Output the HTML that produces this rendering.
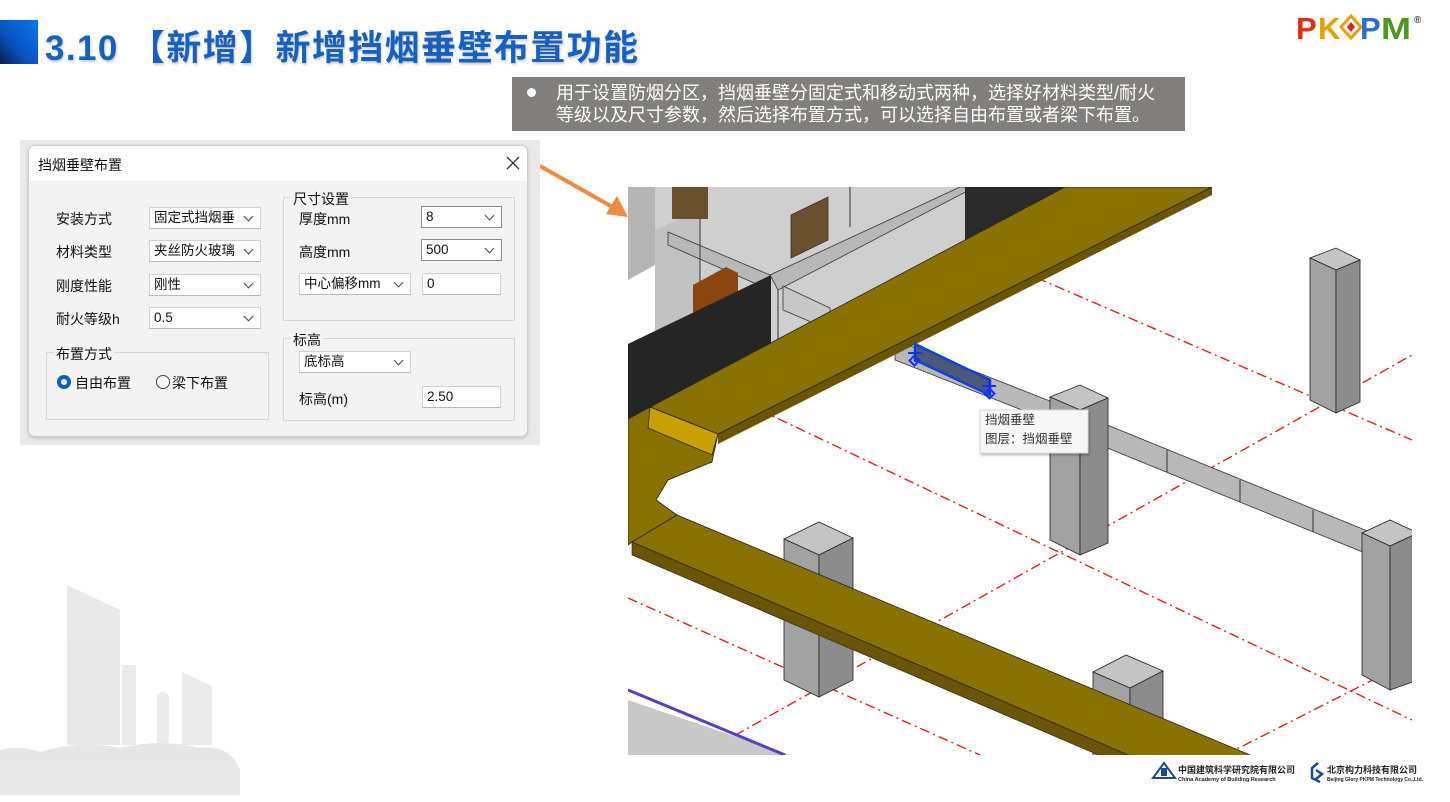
<!DOCTYPE html>
<html><head><meta charset="utf-8"><style>
*{margin:0;padding:0;box-sizing:border-box}
body{width:1450px;height:802px;background:#fff;position:relative;overflow:hidden;font-family:"Liberation Sans","Noto Sans CJK SC",sans-serif}
.abs{position:absolute}
.title{left:45px;top:20px;font-size:35px;font-weight:bold;color:#1560c0;white-space:nowrap;letter-spacing:1.4px;text-shadow:1px 2px 2px rgba(0,0,0,.2)}
.callout{left:512px;top:77px;width:673px;height:54px;background:#807f7e;color:#fff;font-size:18px;line-height:22px;padding:5px 0 0 44px;white-space:nowrap}
.callout:before{content:"";position:absolute;left:15px;top:11px;width:9px;height:9px;border-radius:50%;background:#fff}
.dlgwrap{left:20px;top:140px;width:520px;height:305px;background:#e9e9e9}
.dlg{left:28px;top:145px;width:500px;height:292px;background:#f3f3f3;border:1px solid #cfcfcf;border-radius:7px;overflow:hidden;box-shadow:0 1px 3px rgba(0,0,0,.2)}
.dlg .tb{height:35px;background:#fff;font-size:14px;padding:9px 0 0 9px;color:#111}
.t{position:absolute;font-size:14px;color:#111;white-space:nowrap}
.cb{position:absolute;height:22px;background:#fff;border:1px solid #d0d0d0;border-bottom-color:#b8b8b8;font-size:13.5px;padding:0 0 0 4px;line-height:20px;white-space:nowrap;overflow:hidden;color:#111}
.cb.a:after{content:"";position:absolute;right:8px;top:5px;width:6px;height:6px;border-right:1px solid #444;border-bottom:1px solid #444;transform:rotate(45deg)}
.cb.dk{border-color:#8a8a8a}
.grp{position:absolute;border:1px solid #d6d6d6}
.gl{position:absolute;background:#f3f3f3;font-size:14px;padding:0 2px;color:#111}
</style></head><body>

<svg class="abs" style="left:0;top:0" width="1450" height="802">
<defs>
<linearGradient id="bq" x1="1" y1="0" x2="0" y2="1"><stop offset="0" stop-color="#0a78f0"/><stop offset="0.6" stop-color="#0a52c0"/><stop offset="1" stop-color="#06204a"/></linearGradient>
<clipPath id="ic"><rect x="628" y="187" width="784" height="568"/></clipPath>
</defs>
<rect x="0" y="20" width="38" height="44" fill="url(#bq)"/>
<!-- city bg -->
<g opacity="0.22">
<polygon points="67,585 120,610 120,745 67,745" fill="#9a9a9a"/>
<rect x="122" y="665" width="14" height="80" fill="#a4a4a4"/>
<rect x="157" y="692" width="12" height="55" rx="6" fill="#a8a8a8"/>
<polygon points="182,672 212,686 212,745 182,745" fill="#a6a6a6"/>
<path d="M0,750 Q20,745 40,752 Q80,740 120,748 Q160,738 200,748 Q230,744 240,770 L240,795 L0,795Z" fill="#909090"/>
</g>
<!-- arrow -->
<line x1="540" y1="166" x2="616" y2="209" stroke="#f08a3c" stroke-width="4"/>
<polygon points="628,217 606,214 617,196" fill="#f08a3c"/>

<g clip-path="url(#ic)">
<!-- building -->
<polygon points="628,187 1065,187 650,407 628,419" fill="#cfcfcf"/>
<polygon points="628,187 655,187 655,265 628,280" fill="#b4b4b4"/>
<polygon points="628,280 655,265 655,419 628,419" fill="#fff"/>
<polygon points="655,230 700,210 700,395 655,410" fill="#c2c2c2"/>
<polygon points="668,232 770,275 770,290 668,245" fill="#b8b8b8" stroke="#333" stroke-width=".8"/>
<polygon points="770,275 960,187 975,187 778,290" fill="#b8b8b8" stroke="#333" stroke-width=".8"/>
<line x1="700" y1="215" x2="700" y2="380" stroke="#333"/>
<line x1="778" y1="290" x2="778" y2="340" stroke="#333"/>
<line x1="850" y1="187" x2="850" y2="227" stroke="#333"/>
<polygon points="783,286 830,308 830,330 783,310" fill="#c8c8c8" stroke="#333" stroke-width=".8"/>
<polygon points="965,187 1065,187 1028,207 965,240" fill="#2a2a2a"/>
<rect x="672" y="187" width="36" height="32" fill="#6b5030"/>
<polygon points="791,215 828,197 828,240 791,258" fill="#6b5030" stroke="#333" stroke-width=".8"/>
<polygon points="693,285 726,267 738,273 738,300 705,318 693,312" fill="#8a4510"/>
<polygon points="628,344 771,275 771,343 628,419" fill="#252525"/>
<!-- dashed red grid -->
<g stroke="#e02020" stroke-width="1.4" stroke-dasharray="10,4,2,4" fill="none">
<line x1="1000" y1="262" x2="1412" y2="440"/>
<line x1="760" y1="410" x2="1412" y2="720"/>
<line x1="628" y1="598" x2="980" y2="755"/>
<line x1="700" y1="755" x2="1412" y2="355"/>
<line x1="1225" y1="755" x2="1412" y2="660"/>
</g>
<!-- smoke wall strips -->
<polygon points="895,340 1060,405 1060,425 895,360" fill="#b8b8b8" stroke="#333" stroke-width=".8"/>
<polygon points="1095,420 1370,532 1370,555 1095,443" fill="#b8b8b8" stroke="#333" stroke-width=".8"/>
<line x1="1167" y1="450" x2="1167" y2="472" stroke="#333"/>
<line x1="1240" y1="480" x2="1240" y2="502" stroke="#333"/>
<line x1="1313" y1="510" x2="1313" y2="532" stroke="#333"/>
<!-- upper beam -->
<polygon points="718,434 1212,187 1212,195 718,444" fill="#6a5600"/>
<polygon points="1065,187 1212,187 718,434 650,407" fill="#8a7200" stroke="#222" stroke-width=".8"/>
<!-- corner -->
<polygon points="628,419 650,407 718,434 712,462 668,480 656,500 677,515 632,542 628,545" fill="#8a7200" stroke="#222" stroke-width=".8"/>
<polygon points="650,407 718,434 712,455 648,428" fill="#c8a000" stroke="#222" stroke-width=".8"/>
<!-- columns -->
<g stroke="#222" stroke-width=".8">
<polygon points="1310,258 1336,248 1360,260 1336,270" fill="#c4c4c4"/>
<polygon points="1310,258 1336,270 1336,413 1310,400" fill="#a2a2a2"/>
<polygon points="1336,270 1360,260 1360,402 1336,413" fill="#8c8c8c"/>

<polygon points="1050,397 1080,385 1108,398 1080,410" fill="#c4c4c4"/>
<polygon points="1050,397 1080,410 1080,555 1050,540" fill="#a2a2a2"/>
<polygon points="1080,410 1108,398 1108,543 1080,555" fill="#8c8c8c"/>

<polygon points="784,539 819,522 853,538 819,555" fill="#c4c4c4"/>
<polygon points="784,539 819,555 819,697 784,680" fill="#a2a2a2"/>
<polygon points="819,555 853,538 853,680 819,697" fill="#8c8c8c"/>

<polygon points="1093,672 1126,655 1163,671 1130,688" fill="#c4c4c4"/>
<polygon points="1093,672 1130,688 1130,760 1093,760" fill="#a2a2a2"/>
<polygon points="1130,688 1163,671 1163,760 1130,760" fill="#8c8c8c"/>

<polygon points="1362,533 1390,520 1418,533 1390,546" fill="#c4c4c4"/>
<polygon points="1362,533 1390,546 1390,690 1362,675" fill="#a2a2a2"/>
<polygon points="1390,546 1418,533 1418,680 1390,690" fill="#8c8c8c"/>
</g>
<!-- lower beam (in front of columns) -->
<polygon points="632,542 1140,760 1110,760 632,555" fill="#6a5600" stroke="#222" stroke-width=".6"/>
<polygon points="677,515 1262,760 1140,760 632,542" fill="#8a7200" stroke="#222" stroke-width=".8"/>
<!-- purple + bottom gray -->
<polygon points="628,700 790,755 628,755" fill="#c8c8c8"/>
<line x1="628" y1="690" x2="785" y2="755" stroke="#5a3ec8" stroke-width="3"/>
<!-- selected smoke wall -->
<polygon points="915,344 990,380 990,395 915,360" fill="#4b5878" stroke="#1040e0" stroke-width="2.5"/>
<g stroke="#1030ff" stroke-width="2" fill="none">
<line x1="915" y1="345" x2="915" y2="362"/><line x1="908" y1="353" x2="922" y2="353"/>
<rect x="911" y="357" width="7" height="7" transform="rotate(45 914.5 360.5)"/>
<line x1="989" y1="378" x2="989" y2="393"/><line x1="982" y1="386" x2="996" y2="386"/>
<rect x="986" y="390" width="7" height="7" transform="rotate(45 989.5 393.5)"/>
</g>
</g>
<!-- tooltip -->
<rect x="980" y="410" width="108" height="43" fill="#f7f7f7" stroke="#d8d8d8" filter="drop-shadow(1px 2px 1px rgba(0,0,0,.25))"/>
<text x="985" y="424" font-size="12.5" fill="#333" font-family="Liberation Sans,Noto Sans CJK SC,sans-serif">挡烟垂壁</text>
<text x="985" y="443" font-size="12.5" fill="#333" font-family="Liberation Sans,Noto Sans CJK SC,sans-serif">图层：挡烟垂壁</text>
<!-- PKPM logo -->
<g font-family="Liberation Sans,sans-serif" font-weight="bold" font-size="31">
<text x="1296" y="39" fill="#e03010">P</text>
<text x="1318" y="39" fill="#e8a000">K</text>
<polygon points="1351,16 1361,27 1351,38 1341,27" fill="#fff" stroke="#e8a000" stroke-width="3"/>
<polygon points="1351,22 1355,27 1351,32 1347,27" fill="#e02020"/>
<text x="1360" y="39" fill="#2a70c8">P</text>
<text x="1381" y="39" fill="#4a9a20" textLength="30" lengthAdjust="spacingAndGlyphs">M</text>
<text x="1414" y="23" font-size="10" fill="#444">®</text>
</g>
<!-- footer logos -->
<g font-family="Liberation Sans,Noto Sans CJK SC,sans-serif">
<path d="M1153,778 L1164,763 L1175,778Z" fill="none" stroke="#1a4a9a" stroke-width="2"/>
<rect x="1161" y="768" width="6" height="8" fill="#1a4a9a"/>
<text x="1178" y="773" font-size="9" font-weight="bold" fill="#222">中国建筑科学研究院有限公司</text>
<text x="1178" y="781" font-size="5.5" font-weight="bold" fill="#222">China Academy of Building Research</text>
<path d="M1318,763 L1312,768 L1312,778 L1320,782 M1316,770 L1322,774 L1316,779" fill="none" stroke="#1a4a9a" stroke-width="2.5"/>
<text x="1327" y="773" font-size="9" font-weight="bold" fill="#222">北京构力科技有限公司</text>
<text x="1327" y="781" font-size="5" font-weight="bold" fill="#222">Beijing Glory PKPM Technology Co.,Ltd.</text>
</g>
</svg>

<div class="abs title">3.10 【新增】新增挡烟垂壁布置功能</div>
<div class="abs callout">用于设置防烟分区，挡烟垂壁分固定式和移动式两种，选择好材料类型/耐火<br>等级以及尺寸参数，然后选择布置方式，可以选择自由布置或者梁下布置。</div>

<div class="abs dlgwrap"></div>
<div class="abs dlg">
 <div class="tb">挡烟垂壁布置</div>
 <svg class="abs" style="left:477px;top:10px" width="14" height="14"><path d="M1,1 L13,13 M13,1 L1,13" stroke="#333" stroke-width="1.3"/></svg>
 <div class="t" style="left:27px;top:63px">安装方式</div>
 <div class="t" style="left:27px;top:96px">材料类型</div>
 <div class="t" style="left:27px;top:130px">刚度性能</div>
 <div class="t" style="left:27px;top:163px">耐火等级h</div>
 <div class="cb a" style="left:120px;top:61px;width:112px">固定式挡烟垂</div>
 <div class="cb a" style="left:120px;top:94px;width:112px">夹丝防火玻璃</div>
 <div class="cb a" style="left:120px;top:128px;width:112px">刚性</div>
 <div class="cb a" style="left:120px;top:161px;width:112px">0.5</div>

 <div class="grp" style="left:17px;top:206px;width:223px;height:68px"></div>
 <div class="gl" style="left:25px;top:198px">布置方式</div>
 <div class="abs" style="left:28px;top:229px;width:14px;height:14px;border-radius:50%;border:4px solid #0a5fc8;background:#fff"></div>
 <div class="t" style="left:46px;top:227px">自由布置</div>
 <div class="abs" style="left:127px;top:229px;width:14px;height:14px;border-radius:50%;border:1px solid #444;background:#fff"></div>
 <div class="t" style="left:143px;top:227px">梁下布置</div>

 <div class="grp" style="left:254px;top:51px;width:232px;height:124px"></div>
 <div class="gl" style="left:262px;top:43px">尺寸设置</div>
 <div class="t" style="left:270px;top:63px">厚度mm</div>
 <div class="t" style="left:270px;top:96px">高度mm</div>
 <div class="cb a dk" style="left:392px;top:60px;width:81px">8</div>
 <div class="cb a dk" style="left:392px;top:93px;width:81px">500</div>
 <div class="cb a" style="left:270px;top:127px;width:112px">中心偏移mm</div>
 <div class="cb" style="left:393px;top:127px;width:79px">0</div>

 <div class="grp" style="left:254px;top:192px;width:232px;height:83px"></div>
 <div class="gl" style="left:262px;top:184px">标高</div>
 <div class="cb a" style="left:270px;top:205px;width:112px">底标高</div>
 <div class="t" style="left:270px;top:243px">标高(m)</div>
 <div class="cb" style="left:393px;top:240px;width:79px">2.50</div>
</div>
</body></html>
